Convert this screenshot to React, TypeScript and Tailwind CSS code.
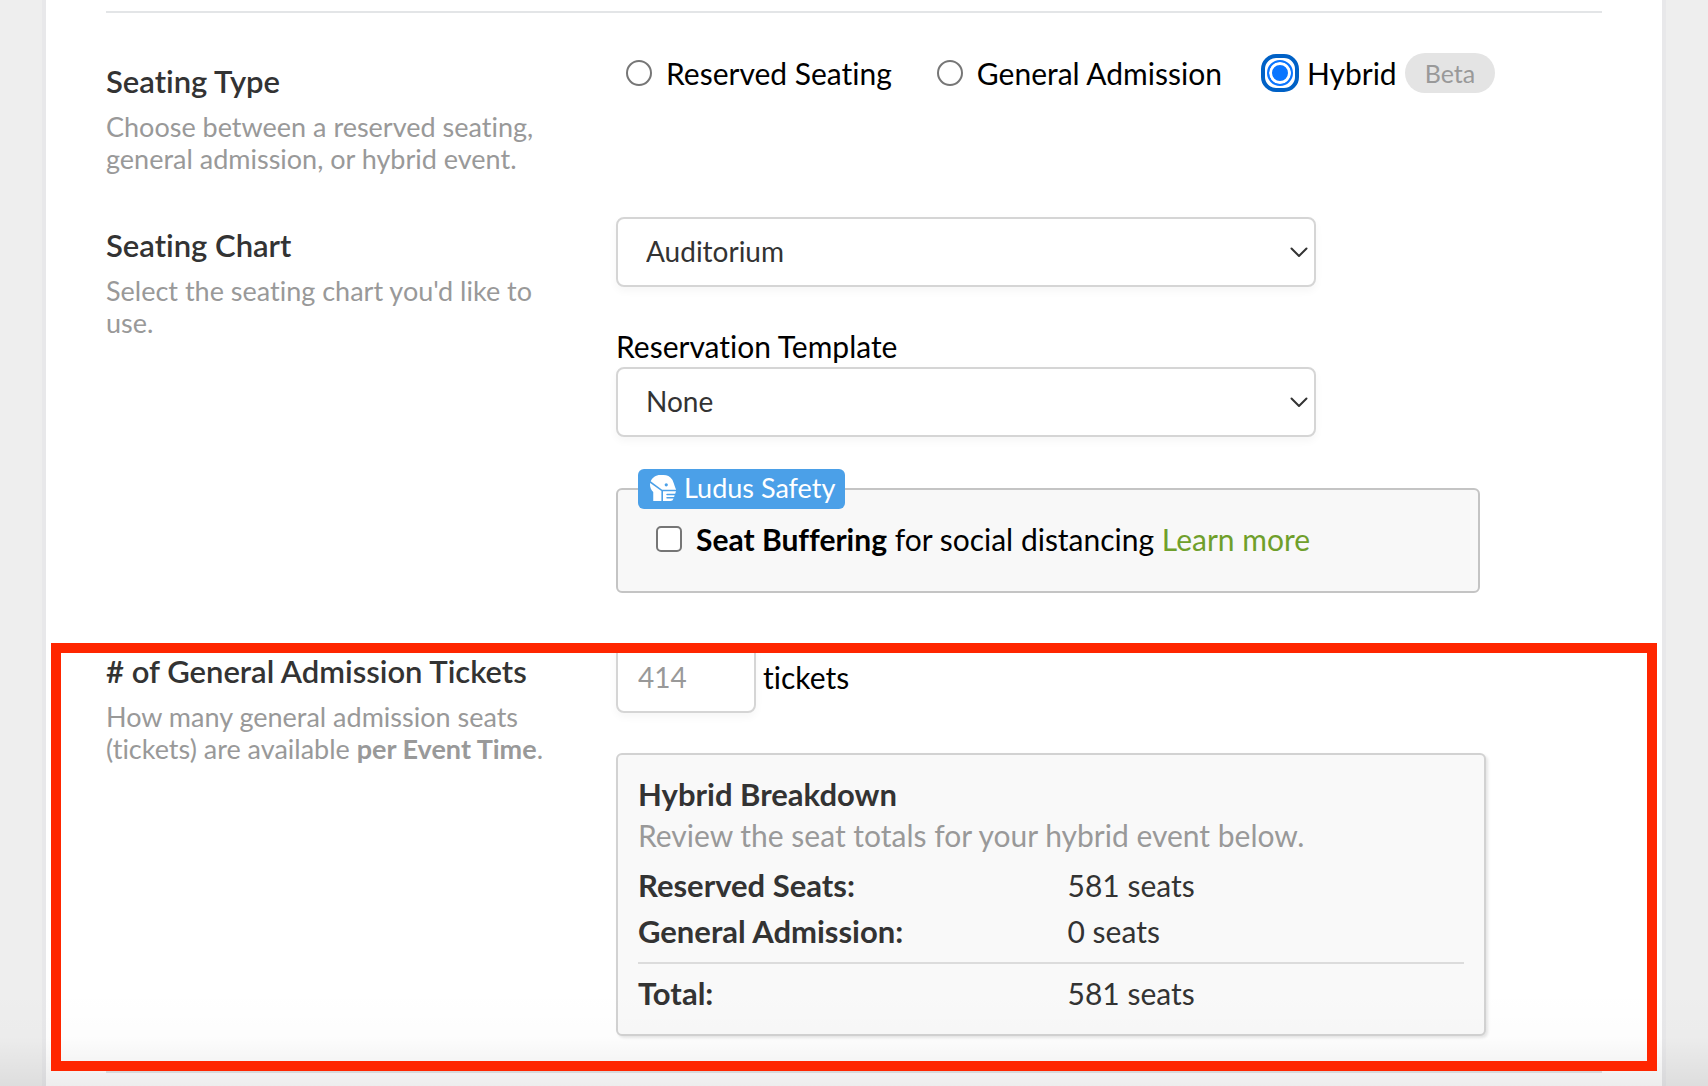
import { ReactNode, useState } from "react";
import { FaHeadSideMask } from "react-icons/fa";

type SeatingType = "reserved" | "general" | "hybrid";

const seatingTypes: { value: SeatingType; label: string; beta?: boolean }[] = [
  { value: "reserved", label: "Reserved Seating" },
  { value: "general", label: "General Admission" },
  { value: "hybrid", label: "Hybrid", beta: true },
];

const breakdown = [
  { label: "Reserved Seats:", seats: 581 },
  { label: "General Admission:", seats: 0 },
];

interface FormRowProps {
  title: string;
  description: ReactNode;
  className?: string;
  children: ReactNode;
}

function FormRow({ title, description, className = "", children }: FormRowProps) {
  return (
    <section className={`relative grid grid-cols-[15fr_29fr] px-[60px] ${className}`}>
      <div className="pt-[10px] pr-14">
        <h2 className="text-[31px] leading-9 font-semibold text-[#333]">{title}</h2>
        <p className="mt-3 text-[27px] leading-8 text-[#999]">{description}</p>
      </div>
      <div>{children}</div>
    </section>
  );
}

interface SelectBoxProps {
  id: string;
  label?: string;
  options: string[];
}

function SelectBox({ id, label, options }: SelectBoxProps) {
  return (
    <div className="relative max-w-[700px]">
      <select
        id={id}
        aria-label={label}
        className="block h-[70px] w-full appearance-none rounded-lg border-2 border-[#d5d5d5] bg-white px-7 pb-[2px] text-[28px] text-[#333] shadow-[0_4px_8px_rgba(0,0,0,0.04)]"
      >
        {options.map((option) => (
          <option key={option}>{option}</option>
        ))}
      </select>
      <svg
        className="pointer-events-none absolute top-[30px] right-2 h-3 w-[18px]"
        viewBox="0 0 18 12"
        fill="none"
        stroke="#333"
        strokeWidth={2}
      >
        <path strokeLinecap="round" strokeLinejoin="round" d="M1.5 1.5L9 9l7.500-7.500" />
      </svg>
    </div>
  );
}

export default function App() {
  const [seatingType, setSeatingType] = useState<SeatingType>("hybrid");

  return (
    <div className="relative min-h-screen bg-[#eee] px-[42px] font-['Lato','Open_Sans',sans-serif] text-[30px] leading-9 text-black [font-variant-ligatures:none]">
      <form className="min-h-screen border-x-4 border-[#e8e8ea] bg-white pt-[11px]">
        <hr className="mx-[60px] border-t-2 border-[#e3e5e7]" />

        <FormRow
          title="Seating Type"
          description="Choose between a reserved seating, general admission, or hybrid event."
          className="mt-10"
        >
          <div className="flex h-10 items-center gap-[45px] pl-[10px] whitespace-nowrap">
            {seatingTypes.map(({ value, label, beta }) => (
              <div key={value} className="flex items-center gap-2">
                <label className="flex items-center gap-[14px]">
                  <span
                    className={
                      seatingType === value
                        ? "-m-[6px] flex rounded-[15px] border-4 border-[#0061c6] p-[2px]"
                        : "flex"
                    }
                  >
                    <input
                      type="radio"
                      name="seating-type"
                      value={value}
                      checked={seatingType === value}
                      onChange={() => setSeatingType(value)}
                      className="size-[26px] appearance-none rounded-full border-2 border-[#767676] bg-white outline-none checked:border-[#0a75ff] checked:bg-[#0a75ff] checked:shadow-[inset_0_0_0_3px_white]"
                    />
                  </span>
                  {label}
                </label>
                {beta && (
                  <span className="rounded-full bg-[#e4e4e4] px-5 text-[25px] leading-10 text-[#999]">Beta</span>
                )}
              </div>
            ))}
          </div>
        </FormRow>

        <FormRow title="Seating Chart" description="Select the seating chart you'd like to use." className="mt-[42px]">
          <SelectBox id="seating-chart" label="Seating Chart" options={["Auditorium"]} />
          <label htmlFor="reservation-template" className="mt-[41px] mb-[3px] block">
            Reservation Template
          </label>
          <SelectBox id="reservation-template" options={["None"]} />

          <fieldset className="mt-8 max-w-[864px] rounded-md border-2 border-[#c4c4c4] bg-[#f8f8f8] pb-[34px]">
            <legend className="ml-5 flex h-10 items-center gap-2 rounded-md bg-[#4ba0e8] pr-[10px] pb-[2px] pl-3 text-[27px] text-white">
              <FaHeadSideMask className="size-[26px]" />
              Ludus Safety
            </legend>
            <div className="flex items-center gap-[14px] pt-3 pl-[38px] whitespace-nowrap">
              <input
                id="seat-buffering"
                type="checkbox"
                className="size-[26px] appearance-none rounded-[5px] border-2 border-[#767676] bg-white checked:bg-[#0a75ff]"
              />
              <p>
                <label htmlFor="seat-buffering">
                  <strong>Seat Buffering</strong> for social distancing
                </label>{" "}
                <a href="#learn-more" className="text-[#6f9f2b]">
                  Learn more
                </a>
              </p>
            </div>
          </fieldset>
        </FormRow>

        <FormRow
          title="# of General Admission Tickets"
          description={
            <>
              How many general admission seats (tickets) are available <strong>per Event Time</strong>.
            </>
          }
          className="mt-[50px] pb-[35px]"
        >
          <div className="flex items-center gap-[7px]">
            <input
              id="ticket-count"
              type="text"
              inputMode="numeric"
              placeholder="414"
              className="h-[70px] w-[140px] rounded-lg border-2 border-[#d5d5d5] bg-white px-5 pb-[2px] text-[28px] shadow-[0_4px_8px_rgba(0,0,0,0.04)] placeholder:text-[#999]"
            />
            <label htmlFor="ticket-count" className="pb-[2px]">
              tickets
            </label>
          </div>

          <div className="mt-10 max-w-[870px] rounded-md border-2 border-[#d2d2d2] bg-[#f9f9f9] px-5 pt-[19px] pb-[18px] text-[#333] shadow-[2px_2px_3px_rgba(0,0,0,0.1)]">
            <h3 className="text-[31px] leading-10 font-bold">Hybrid Breakdown</h3>
            <p className="leading-[42px] text-[#999]">Review the seat totals for your hybrid event below.</p>
            <table className="mt-[6px] w-full text-left leading-[46px]">
              <tbody>
                {breakdown.map(({ label, seats }) => (
                  <tr key={label} className="last:*:pb-2">
                    <th className="w-[52%] text-[31px] font-bold">{label}</th>
                    <td>{seats} seats</td>
                  </tr>
                ))}
              </tbody>
              <tfoot className="border-t-2 border-[#dcdcdc]">
                <tr>
                  <th className="pt-[6px] text-[31px] font-bold">Total:</th>
                  <td className="pt-[6px]">{breakdown.reduce((sum, row) => sum + row.seats, 0)} seats</td>
                </tr>
              </tfoot>
            </table>
          </div>

          <div className="pointer-events-none absolute inset-x-[5px] inset-y-0 z-20 border-10 border-[#ff2600]" />
        </FormRow>

        <hr className="mx-[60px] border-t-2 border-[#e3e5e7]" />
      </form>

      {/* fade at the bottom of the viewport */}
      <div className="pointer-events-none absolute inset-x-0 bottom-0 z-10 h-24 bg-linear-to-b from-black/0 via-black/1 to-black/7" />
    </div>
  );
}
